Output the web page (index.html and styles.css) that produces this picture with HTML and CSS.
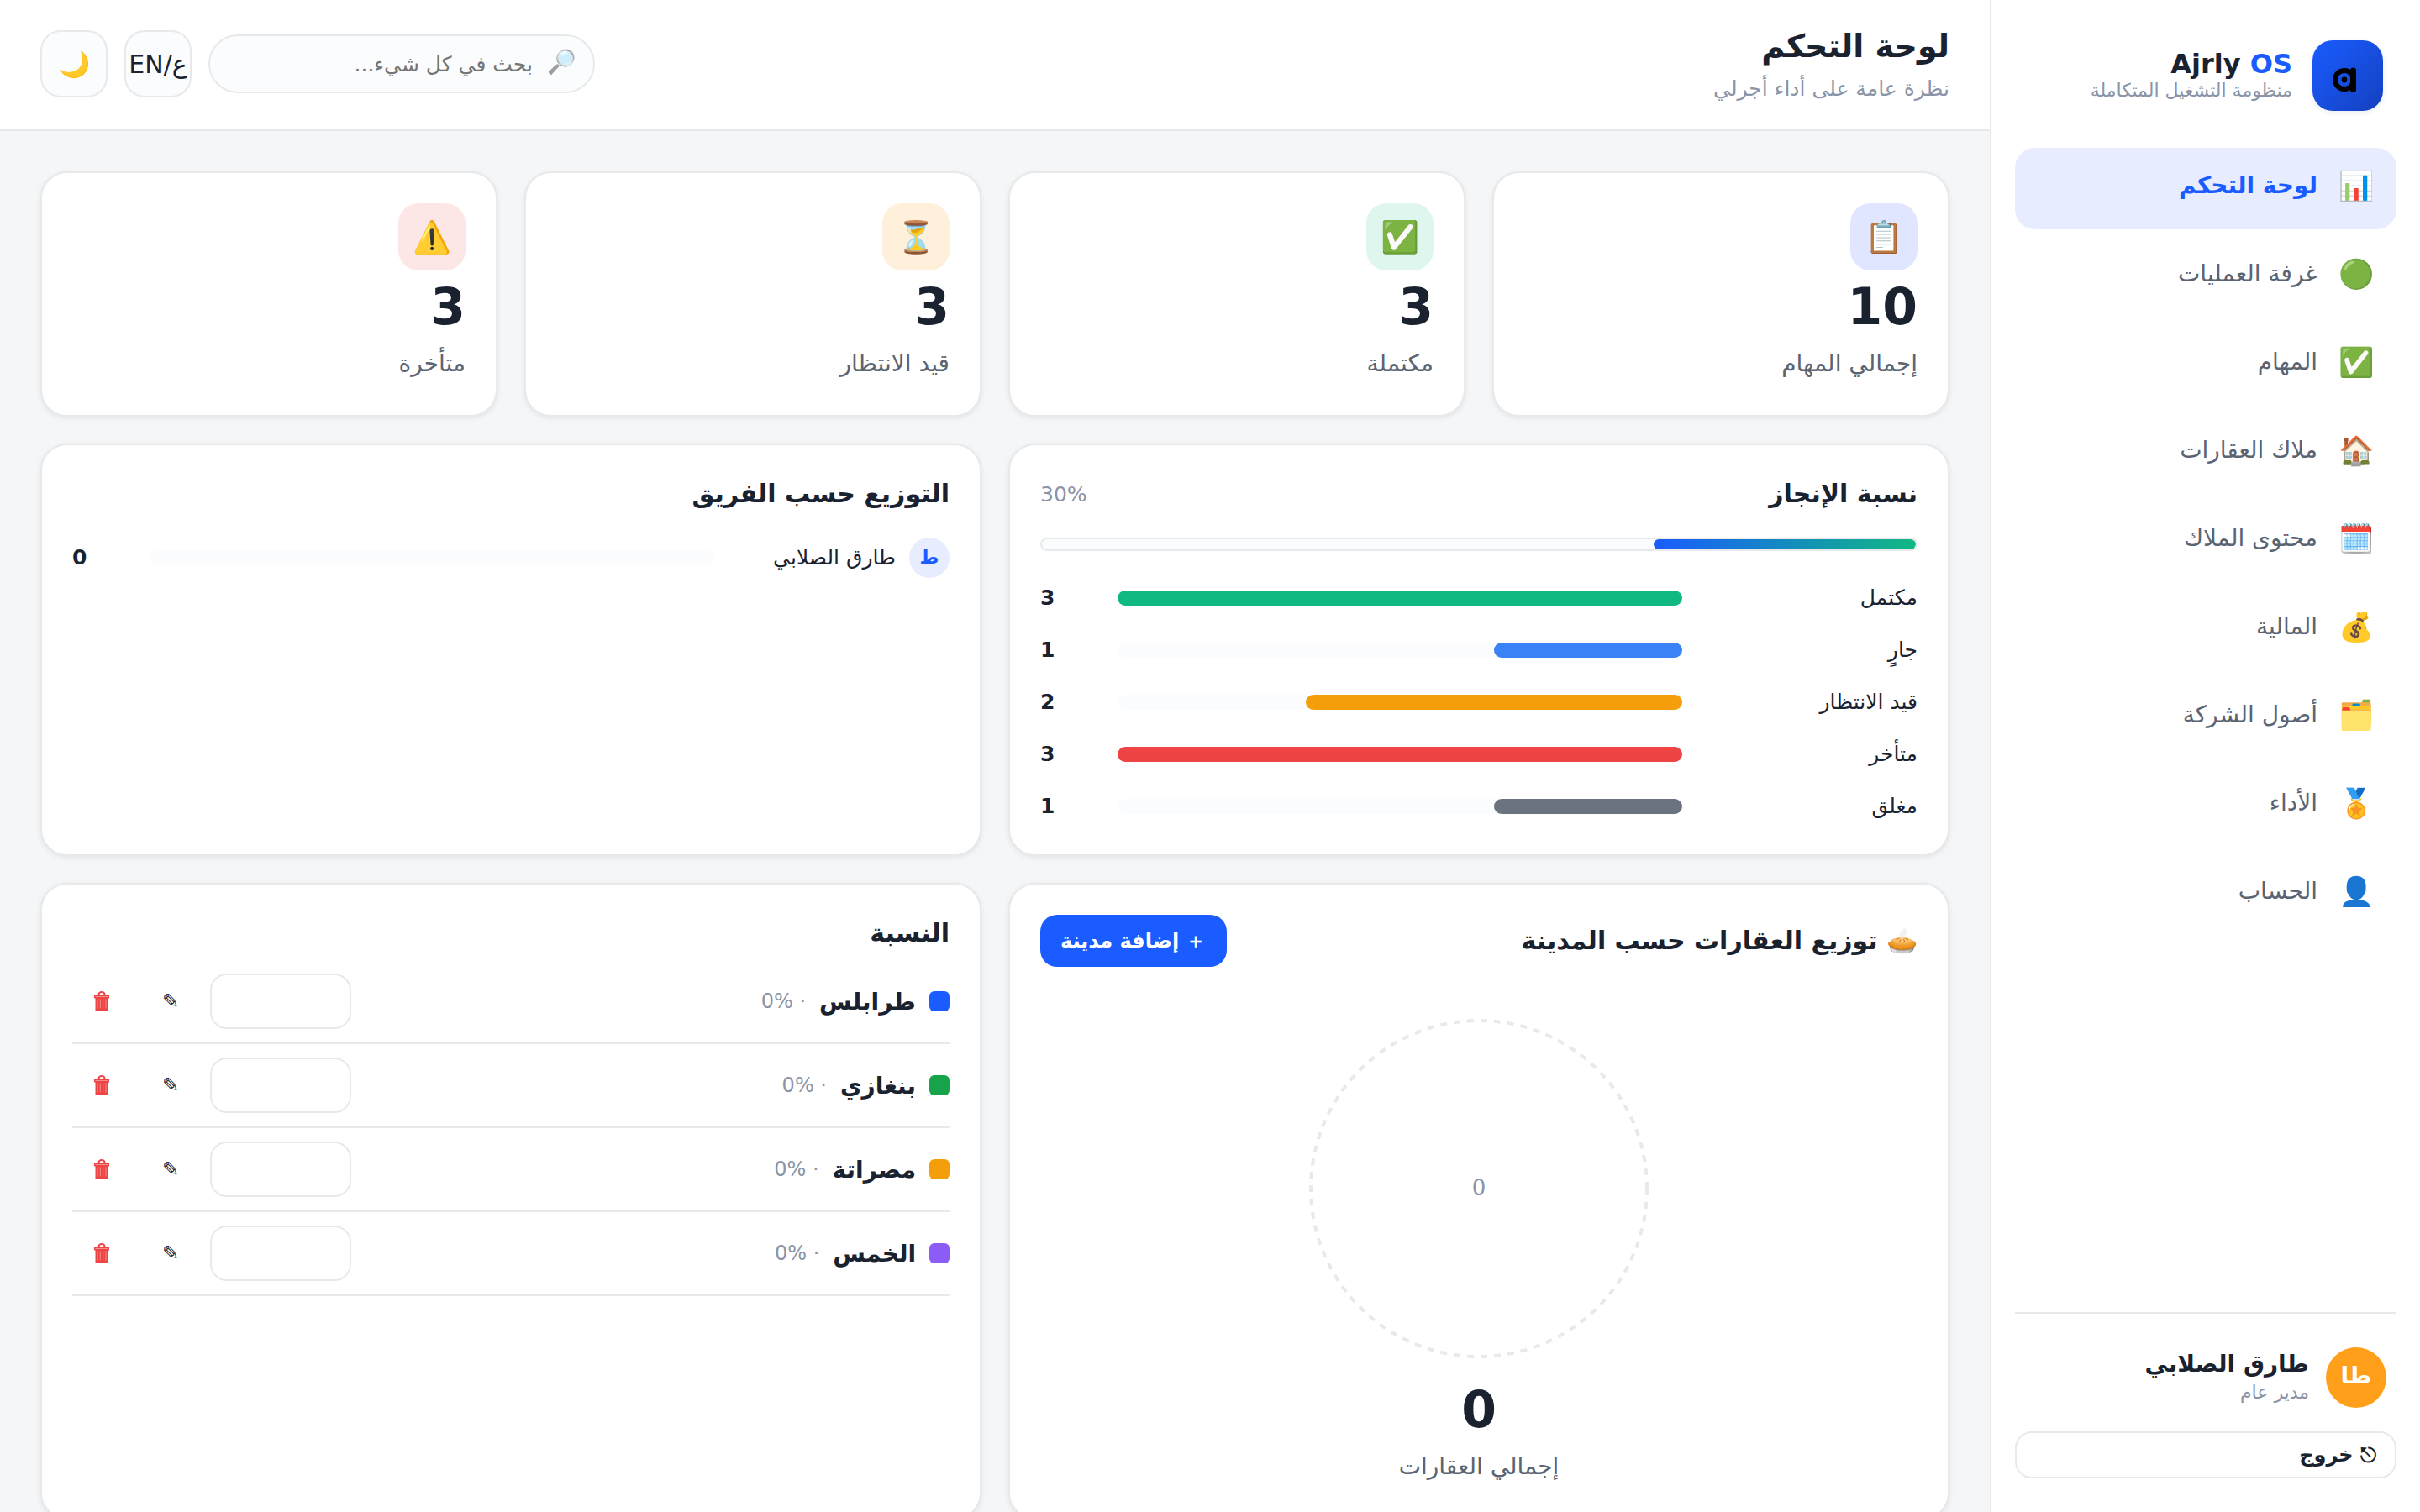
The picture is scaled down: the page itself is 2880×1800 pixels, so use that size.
FILE: index.html
```html
<!DOCTYPE html>
<html lang="ar" dir="rtl">
  <head>
    <meta charset="UTF-8" />
    <meta name="viewport" content="width=device-width, initial-scale=1.0" />
    <title>Ajrly OS</title>
    <link rel="stylesheet" href="styles.css">
  </head>
  <body>
    <svg class="sprite">
      <symbol id="trash" viewBox="0 0 28 24">
        <path d="M10.5 4a3.5 3 0 0 1 7 0" fill="none" stroke="currentColor" stroke-width="2" />
        <path d="M5 4.5h18v4h-1.500V23h-15V8.500H5z" fill="currentColor" />
        <path d="M6.5 6.5h15M9 9.5v11M12.300 9.500v11M15.700 9.500v11M19 9.500v11" fill="none" stroke="#fff" stroke-opacity="0.5" stroke-width="0.8" />
      </symbol>
    </svg>

    <div class="app">
      <aside class="sidebar">
        <div class="brand">
          <div class="brand-logo">
            <svg viewBox="0 0 84 84" aria-hidden="true">
              <circle cx="38" cy="47" r="11" fill="none" stroke="#000" stroke-width="6" />
              <circle cx="38" cy="47" r="3.4" />
              <path d="M48.5 36v22.500" fill="none" stroke="#000" stroke-width="7" stroke-linecap="round" />
            </svg>
          </div>
          <div>
            <div class="brand-name">Ajrly <span>OS</span></div>
            <div class="brand-sub">منظومة التشغيل المتكاملة</div>
          </div>
        </div>

        <nav class="nav">
          <a class="nav-item active" href="#"><span class="nav-icon">📊</span>لوحة التحكم</a>
          <a class="nav-item" href="#"><span class="nav-icon">🟢</span>غرفة العمليات</a>
          <a class="nav-item" href="#"><span class="nav-icon">✅</span>المهام</a>
          <a class="nav-item" href="#"><span class="nav-icon">🏠</span>ملاك العقارات</a>
          <a class="nav-item" href="#"><span class="nav-icon">🗓️</span>محتوى الملاك</a>
          <a class="nav-item" href="#"><span class="nav-icon">💰</span>المالية</a>
          <a class="nav-item" href="#"><span class="nav-icon">🗂️</span>أصول الشركة</a>
          <a class="nav-item" href="#"><span class="nav-icon">🏅</span>الأداء</a>
          <a class="nav-item" href="#"><span class="nav-icon">👤</span>الحساب</a>
        </nav>

        <div class="sidebar-foot">
          <div class="user">
            <div class="user-avatar">طا</div>
            <div>
              <div class="user-name">طارق الصلابي</div>
              <div class="user-role">مدير عام</div>
            </div>
          </div>
          <button class="logout" type="button">⎋ خروج</button>
        </div>
      </aside>

      <div class="main">
        <header class="topbar">
          <div>
            <h1 class="page-title">لوحة التحكم</h1>
            <div class="page-sub">نظرة عامة على أداء أجرلي</div>
          </div>
          <div class="tools">
            <label class="search">
              <span class="search-icon">🔎</span>
              <input type="search" placeholder="بحث في كل شيء..." aria-label="بحث" />
            </label>
            <button class="icon-btn" type="button">ع/EN</button>
            <button class="icon-btn" type="button">🌙</button>
          </div>
        </header>

        <main class="content">
          <section class="stats">
            <div class="card">
              <div class="stat-icon blue">📋</div>
              <div class="stat-value">10</div>
              <div class="stat-label">إجمالي المهام</div>
            </div>
            <div class="card">
              <div class="stat-icon green">✅</div>
              <div class="stat-value">3</div>
              <div class="stat-label">مكتملة</div>
            </div>
            <div class="card">
              <div class="stat-icon amber">⏳</div>
              <div class="stat-value">3</div>
              <div class="stat-label">قيد الانتظار</div>
            </div>
            <div class="card">
              <div class="stat-icon red">⚠️</div>
              <div class="stat-value">3</div>
              <div class="stat-label">متأخرة</div>
            </div>
          </section>

          <section class="panels">
            <div class="card">
              <div class="card-head">
                <h2>نسبة الإنجاز</h2>
                <span class="muted">30%</span>
              </div>
              <div class="progress"><div class="progress-bar" style="width: 30%"></div></div>
              <div class="bar-list">
                <div class="bar-row">
                  <span class="bar-label">مكتمل</span>
                  <div class="bar"><div class="bar-fill done" style="width: 100%"></div></div>
                  <b class="bar-count">3</b>
                </div>
                <div class="bar-row">
                  <span class="bar-label">جارٍ</span>
                  <div class="bar"><div class="bar-fill doing" style="width: 33.33%"></div></div>
                  <b class="bar-count">1</b>
                </div>
                <div class="bar-row">
                  <span class="bar-label">قيد الانتظار</span>
                  <div class="bar"><div class="bar-fill waiting" style="width: 66.67%"></div></div>
                  <b class="bar-count">2</b>
                </div>
                <div class="bar-row">
                  <span class="bar-label">متأخر</span>
                  <div class="bar"><div class="bar-fill late" style="width: 100%"></div></div>
                  <b class="bar-count">3</b>
                </div>
                <div class="bar-row">
                  <span class="bar-label">مغلق</span>
                  <div class="bar"><div class="bar-fill closed" style="width: 33.33%"></div></div>
                  <b class="bar-count">1</b>
                </div>
              </div>
            </div>

            <div class="card">
              <div class="card-head">
                <h2>التوزيع حسب الفريق</h2>
              </div>
              <div class="team-list">
                <div class="bar-row">
                  <span class="bar-label"><span class="mini-avatar">ط</span>طارق الصلابي</span>
                  <div class="bar"></div>
                  <b class="bar-count">0</b>
                </div>
              </div>
            </div>

            <div class="card">
              <div class="card-head">
                <h2>🥧 توزيع العقارات حسب المدينة</h2>
                <button class="btn-primary" type="button">＋ إضافة مدينة</button>
              </div>
              <div class="pie">
                <svg class="pie-chart" viewBox="0 0 440 440">
                  <circle cx="220" cy="220" r="200" fill="none" stroke="#e7e9ea" stroke-width="4" stroke-dasharray="8 8" />
                  <text x="220" y="228" text-anchor="middle">0</text>
                </svg>
                <div class="stat-value">0</div>
                <div class="stat-label">إجمالي العقارات</div>
              </div>
            </div>

            <div class="card">
              <div class="card-head">
                <h2>النسبة</h2>
              </div>
              <div class="city-row">
                <span class="swatch tripoli"></span>
                <label class="city-name" for="city1">طرابلس</label>
                <span class="city-share">· 0%</span>
                <input class="city-input" id="city1" type="text" />
                <button class="btn-ghost" type="button" title="تعديل">✎</button>
                <button class="btn-ghost danger" type="button" title="حذف"><svg><use href="#trash" /></svg></button>
              </div>
              <div class="city-row">
                <span class="swatch benghazi"></span>
                <label class="city-name" for="city2">بنغازي</label>
                <span class="city-share">· 0%</span>
                <input class="city-input" id="city2" type="text" />
                <button class="btn-ghost" type="button" title="تعديل">✎</button>
                <button class="btn-ghost danger" type="button" title="حذف"><svg><use href="#trash" /></svg></button>
              </div>
              <div class="city-row">
                <span class="swatch misrata"></span>
                <label class="city-name" for="city3">مصراتة</label>
                <span class="city-share">· 0%</span>
                <input class="city-input" id="city3" type="text" />
                <button class="btn-ghost" type="button" title="تعديل">✎</button>
                <button class="btn-ghost danger" type="button" title="حذف"><svg><use href="#trash" /></svg></button>
              </div>
              <div class="city-row">
                <span class="swatch khoms"></span>
                <label class="city-name" for="city4">الخمس</label>
                <span class="city-share">· 0%</span>
                <input class="city-input" id="city4" type="text" />
                <button class="btn-ghost" type="button" title="تعديل">✎</button>
                <button class="btn-ghost danger" type="button" title="حذف"><svg><use href="#trash" /></svg></button>
              </div>
            </div>
          </section>
        </main>
      </div>
    </div>
  </body>
</html>
```
FILE: styles.css
```css
:root {
  --bg: #f4f6f8;
  --surface: #ffffff;
  --surface-2: #fafcfd;
  --border: #e7e9ea;
  --text: #1a2230;
  --text-2: #5b6472;
  --muted: #8a94a6;
  --primary: #1a5cff;
  --primary-soft: #e7ecff;
  --danger: #ef4444;
}

* {
  box-sizing: border-box;
}

body {
  margin: 0;
  background: var(--bg);
  color: var(--text);
  font-family: "DejaVu Sans", sans-serif;
  font-size: 28px;
}

button,
input {
  font-family: inherit;
  color: inherit;
}

.sprite {
  display: none;
}

.app {
  display: flex;
  height: 100vh;
  overflow: hidden;
}

/* sidebar */
.sidebar {
  width: 512px;
  flex-shrink: 0;
  display: flex;
  flex-direction: column;
  padding: 40px 28px;
  background: var(--surface);
  border-left: 2px solid var(--border);
}

.brand {
  display: flex;
  align-items: center;
  gap: 24px;
  padding: 8px 16px 44px;
}

.brand-logo {
  width: 84px;
  height: 84px;
  border-radius: 24px;
  background: linear-gradient(135deg, #1a5cff, #1440c0);
  box-shadow: 0 2px 6px rgba(16, 24, 40, 0.08);
}

.brand-logo svg {
  display: block;
}

.brand-name {
  font-size: 32px;
  line-height: 36px;
  font-weight: bold;
}

.brand-name span {
  color: var(--primary);
}

.brand-sub {
  font-size: 22px;
  line-height: 28px;
  color: var(--muted);
}

.nav {
  flex: 1;
  display: flex;
  flex-direction: column;
  gap: 8px;
}

.nav-item {
  display: flex;
  align-items: center;
  gap: 22px;
  height: 97px;
  padding: 0 24px 8px;
  border-radius: 24px;
  color: var(--text-2);
  font-size: 28px;
  text-decoration: none;
}

.nav-item.active {
  background: var(--primary-soft);
  color: var(--primary);
  font-weight: bold;
}

.nav-icon {
  width: 48px;
  font-size: 34px;
  text-align: center;
}

.sidebar-foot {
  padding-top: 28px;
  border-top: 2px solid var(--border);
}

.user {
  display: flex;
  align-items: center;
  gap: 20px;
  padding: 12px;
  margin-bottom: 16px;
}

.user-avatar {
  display: flex;
  align-items: center;
  justify-content: center;
  width: 72px;
  height: 72px;
  padding-bottom: 6px;
  border-radius: 50%;
  background: #ff9f1a;
  color: #fff;
  font-weight: bold;
}

.user-name {
  font-size: 28px;
  line-height: 36px;
  font-weight: bold;
}

.user-role {
  font-size: 22px;
  line-height: 32px;
  color: var(--muted);
}

.logout {
  width: 100%;
  height: 56px;
  padding: 0 22px;
  border: 2px solid var(--border);
  border-radius: 20px;
  background: var(--surface);
  font-size: 24px;
  font-weight: bold;
  text-align: right;
}

/* topbar */
.main {
  flex: 1;
  min-width: 0;
}

.topbar {
  display: flex;
  align-items: center;
  justify-content: space-between;
  height: 156px;
  padding: 0 48px 2px;
  background: var(--surface);
  border-bottom: 2px solid var(--border);
}

.page-title {
  margin: 0;
  font-size: 38px;
  line-height: 60px;
}

.page-sub {
  font-size: 25px;
  line-height: 42px;
  color: var(--muted);
}

.tools {
  display: flex;
  align-items: center;
  gap: 20px;
}

.search {
  position: relative;
  width: 460px;
}

.search-icon {
  position: absolute;
  top: 16px;
  right: 22px;
  font-size: 28px;
  opacity: 0.6;
}

.search input {
  display: block;
  width: 100%;
  height: 70px;
  padding: 0 72px 0 24px;
  border: 2px solid var(--border);
  border-radius: 35px;
  background: var(--surface-2);
  font-size: 25px;
}

.icon-btn {
  display: flex;
  align-items: center;
  justify-content: center;
  width: 80px;
  height: 80px;
  padding: 0;
  border: 2px solid var(--border);
  border-radius: 24px;
  background: var(--surface-2);
  font-size: 30px;
}

/* cards */
.content {
  padding: 48px;
}

.stats {
  display: grid;
  grid-template-columns: repeat(4, 1fr);
  gap: 32px;
  margin-bottom: 32px;
}

.panels {
  display: grid;
  grid-template-columns: repeat(2, 1fr);
  gap: 32px;
}

.card {
  padding: 36px;
  background: var(--surface);
  border: 2px solid var(--border);
  border-radius: 32px;
  box-shadow: 0 2px 6px rgba(16, 24, 40, 0.08);
}

.card-head {
  display: flex;
  align-items: center;
  justify-content: space-between;
  min-height: 44px;
  margin-bottom: 10px;
}

.card-head h2 {
  margin: 0;
  font-size: 30px;
  line-height: 44px;
}

.muted {
  font-size: 25px;
  color: var(--muted);
}

.stat-icon {
  display: flex;
  align-items: center;
  justify-content: center;
  width: 80px;
  height: 80px;
  border-radius: 24px;
  font-size: 37px;
}

.stat-icon.blue {
  background: #e0e6ff;
}

.stat-icon.green {
  background: #def6ed;
}

.stat-icon.amber {
  background: #fef0db;
}

.stat-icon.red {
  background: #fde6e6;
}

.stat-value {
  font-size: 60px;
  line-height: 86px;
  font-weight: bold;
}

.stat-label {
  font-size: 28px;
  line-height: 50px;
  color: var(--text-2);
}

/* bars */
.progress {
  height: 16px;
  margin: 30px 0 35px;
  border: 2px solid var(--border);
  border-radius: 8px;
  background: var(--surface-2);
  overflow: hidden;
}

.progress-bar {
  height: 100%;
  border-radius: 8px;
  background: linear-gradient(90deg, #1a5cff, #10b981);
}

.bar-list {
  display: flex;
  flex-direction: column;
  gap: 20px;
}

.team-list {
  margin-top: 30px;
}

.bar-row {
  display: grid;
  grid-template-columns: 260px 1fr 72px;
  align-items: center;
  gap: 20px;
  font-size: 25px;
  line-height: 42px;
}

.bar-label {
  display: flex;
  align-items: center;
  gap: 16px;
}

.bar {
  height: 18px;
  border-radius: 9px;
  background: var(--surface-2);
}

.bar-fill {
  height: 100%;
  border-radius: 9px;
}

.bar-fill.done {
  background: #10b981;
}

.bar-fill.doing {
  background: #3b82f6;
}

.bar-fill.waiting {
  background: #f59e0b;
}

.bar-fill.late {
  background: #ef4444;
}

.bar-fill.closed {
  background: #6b7280;
}

.bar-count {
  text-align: left;
}

.mini-avatar {
  display: flex;
  align-items: center;
  justify-content: center;
  width: 48px;
  height: 48px;
  border-radius: 50%;
  background: var(--primary-soft);
  color: var(--primary);
  font-size: 22px;
  font-weight: bold;
}

/* cities */
.btn-primary {
  height: 62px;
  padding: 0 24px;
  border: none;
  border-radius: 20px;
  background: var(--primary);
  color: #fff;
  font-size: 24px;
  font-weight: bold;
}

.pie {
  padding-top: 34px;
  text-align: center;
}

.pie-chart {
  display: block;
  width: 440px;
  margin: 0 auto;
}

.pie-chart text {
  font-size: 26px;
  fill: var(--muted);
}

.city-row {
  display: flex;
  align-items: center;
  gap: 16px;
  padding: 16px 0;
  border-bottom: 2px solid var(--border);
}

.swatch {
  width: 24px;
  height: 24px;
  border-radius: 6px;
}

.swatch.tripoli {
  background: #1a5cff;
}

.swatch.benghazi {
  background: #16a34a;
}

.swatch.misrata {
  background: #f59e0b;
}

.swatch.khoms {
  background: #8b5cf6;
}

.city-name {
  font-weight: bold;
}

.city-share {
  font-size: 24px;
  color: var(--muted);
}

.city-input {
  width: 168px;
  height: 66px;
  margin-right: auto;
  padding: 0 20px;
  border: 2px solid var(--border);
  border-radius: 20px;
  background: var(--surface);
  font-size: 26px;
}

.btn-ghost {
  padding: 0 21px;
  border: none;
  background: none;
  font-size: 24px;
  font-weight: bold;
}

.btn-ghost svg {
  display: block;
  width: 28px;
  height: 24px;
}

.btn-ghost.danger {
  color: var(--danger);
}
```
